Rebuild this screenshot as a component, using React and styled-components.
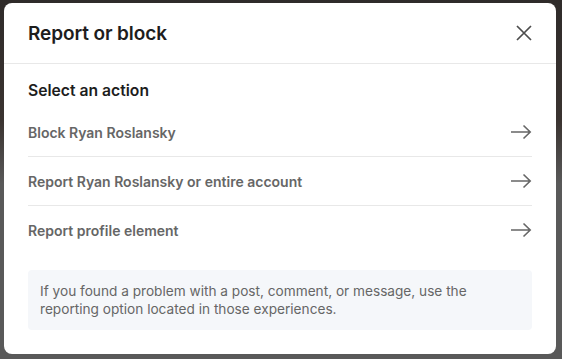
import styled, { createGlobalStyle } from "styled-components";

const GlobalStyle = createGlobalStyle`
  html, body {
    margin: 0;
    padding: 0;
    background: #595959;
  }
  body {
    font-family: Inter, "Noto Sans", "Liberation Sans", sans-serif;
    -webkit-font-smoothing: antialiased;
  }
`;

const Backdrop = styled.div`
  width: 562px;
  height: 359px;
  box-sizing: border-box;
  padding: 3px 6px 5px 4px;
  background: linear-gradient(180deg, #2f2b2a 0px, #3a3330 120px, #595959 184px);
`;

const Modal = styled.div`
  width: 552px;
  height: 351px;
  box-sizing: border-box;
  background: #ffffff;
  border-radius: 8px;
  display: flex;
  flex-direction: column;
  overflow: hidden;
`;

const Header = styled.div`
  height: 60px;
  padding: 0 24px;
  display: flex;
  align-items: center;
  justify-content: space-between;
  border-bottom: 1px solid #e8e8e8;
`;

const Title = styled.h2`
  margin: 0;
  font-size: 19px;
  font-weight: 600;
  color: #1d1d1d;
  letter-spacing: -0.1px;
`;

const CloseButton = styled.button`
  width: 16px;
  height: 16px;
  padding: 0;
  border: 0;
  background: none;
  color: #4d4d4d;
  display: flex;
  cursor: pointer;
`;

const Body = styled.div`
  padding: 15px 24px 24px;
  display: flex;
  flex-direction: column;
`;

const Heading = styled.h3`
  margin: 0 0 5px;
  font-size: 15.7px;
  line-height: 24px;
  font-weight: 600;
  color: #1d1d1d;
`;

const List = styled.ul`
  list-style: none;
  margin: 0;
  padding: 0;
`;

const Row = styled.li`
  height: 48px;
  display: flex;
  align-items: center;
  justify-content: space-between;
  border-bottom: ${(p) => (p.$last ? "none" : "1px solid #e8e8e8")};
  font-size: 14px;
  font-weight: 600;
  color: #666666;
  cursor: pointer;
`;

const Notice = styled.p`
  margin: 16px 0 0;
  padding: 12px 12px;
  background: #f5f7fa;
  border-radius: 4px;
  font-size: 13.65px;
  line-height: 18px;
  color: #666666;
`;

const Arrow = () => (
  <svg width="22" height="16" viewBox="0 0 22 16" fill="none">
    <path
      d="M1 8h19M13.5 1.5L20.2 8l-6.7 6.5"
      stroke="#666"
      strokeWidth="1.6"
    />
  </svg>
);

const CloseIcon = () => (
  <svg width="16" height="16" viewBox="0 0 16 16" fill="none">
    <path d="M1 1l14 14M15 1L1 15" stroke="currentColor" strokeWidth="1.7" />
  </svg>
);

const actions = [
  "Block Ryan Roslansky",
  "Report Ryan Roslansky or entire account",
  "Report profile element",
];

export default function App() {
  return (
    <>
      <GlobalStyle />
      <Backdrop>
        <Modal>
          <Header>
            <Title>Report or block</Title>
            <CloseButton aria-label="Dismiss">
              <CloseIcon />
            </CloseButton>
          </Header>
          <Body>
            <Heading>Select an action</Heading>
            <List>
              {actions.map((a, i) => (
                <Row key={a} $last={i === actions.length - 1}>
                  {a}
                  <Arrow />
                </Row>
              ))}
            </List>
            <Notice>
              If you found a problem with a post, comment, or message, use the
              reporting option located in those experiences.
            </Notice>
          </Body>
        </Modal>
      </Backdrop>
    </>
  );
}
